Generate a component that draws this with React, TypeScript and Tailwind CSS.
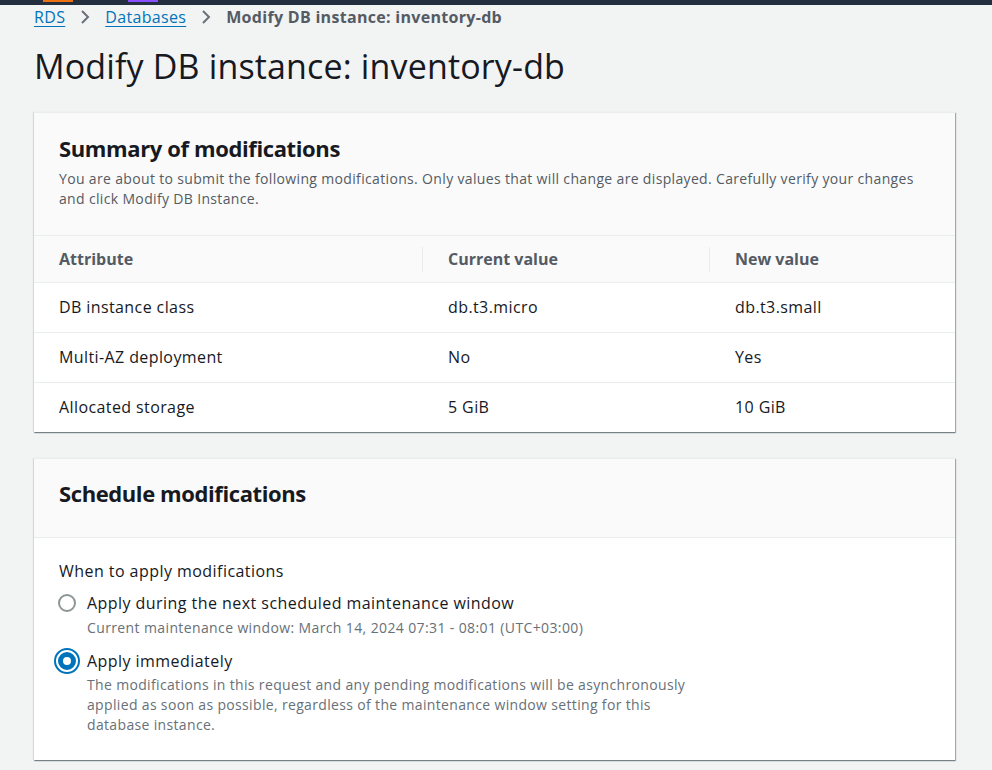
import React from "react";

const rows = [
  { attr: "DB instance class", current: "db.t3.micro", next: "db.t3.small" },
  { attr: "Multi-AZ deployment", current: "No", next: "Yes" },
  { attr: "Allocated storage", current: "5 GiB", next: "10 GiB" },
];

const cardShadow =
  "shadow-[1px_1px_1px_0_rgba(0,28,36,0.3),0_1px_1px_0_rgba(0,28,36,0.3),-1px_0_1px_0_rgba(0,28,36,0.08)]";

const Chevron: React.FC = () => (
  <svg width="10" height="16" viewBox="0 0 10 16" className="mx-[15px]" fill="none">
    <path d="M2 2l6 6-6 6" stroke="#687078" strokeWidth="2" />
  </svg>
);

const App: React.FC = () => {
  return (
    <div className="min-h-[770px] bg-[#f2f3f3] font-['Open_Sans',sans-serif] text-[#16191f]">
      {/* top nav sliver */}
      <div className="flex h-[5px] items-start bg-[#232f3e]">
        <div className="ml-[43px] h-[2px] w-[30px] bg-[#ec7211]" />
        <div className="ml-[55px] h-[2px] w-[30px] bg-[#8c4fff]" />
      </div>

      <div className="pl-[34px] pr-[37px]">
        {/* breadcrumbs */}
        <nav className="flex h-[24px] items-center text-[16px] leading-[24px] tracking-[0.33px]">
          <a className="text-[#0073bb] underline underline-offset-[3px]">RDS</a>
          <Chevron />
          <a className="text-[#0073bb] underline underline-offset-[3px]">Databases</a>
          <Chevron />
          <span className="font-bold text-[#545b64] tracking-[0.3px]">Modify DB instance: inventory-db</span>
        </nav>

        <h1 className="mt-[15px] text-[34px] leading-[44px] font-normal tracking-[0.15px]">
          Modify DB instance: inventory-db
        </h1>

        {/* summary card */}
        <section className={`mt-[24px] bg-white ${cardShadow}`}>
          <div className="border-t border-[#eaeded] bg-[#fafafa] px-[25px] pt-[21px] pb-[26px]">
            <h2 className="text-[22px] leading-[28px] font-bold tracking-[-0.38px]">
              Summary of modifications
            </h2>
            <p className="mt-[7px] text-[14px] leading-[20px] tracking-[0.34px] text-[#545b64]">
              You are about to submit the following modifications. Only values that will change are
              displayed. Carefully verify your changes and click Modify DB Instance.
            </p>
          </div>

          <div className="grid grid-cols-[388px_287px_1fr] border-t border-[#eaeded] bg-[#fafafa] text-[16px] font-bold text-[#545b64]">
            <div className="flex h-[46px] items-center pl-[25px]">Attribute</div>
            <div className="flex h-[46px] items-center">
              <span className="h-[25px] border-l border-[#eaeded]" />
              <span className="pl-[25px]">Current value</span>
            </div>
            <div className="flex h-[46px] items-center">
              <span className="h-[25px] border-l border-[#eaeded]" />
              <span className="pl-[25px]">New value</span>
            </div>
          </div>

          {rows.map((r) => (
            <div
              key={r.attr}
              className="grid h-[50px] grid-cols-[388px_287px_1fr] items-center border-t border-[#eaeded] text-[16px] tracking-[0.4px]"
            >
              <div className="pl-[25px] pb-[2px]">{r.attr}</div>
              <div className="pl-[26px] pb-[2px]">{r.current}</div>
              <div className="pl-[26px] pb-[2px]">{r.next}</div>
            </div>
          ))}
        </section>

        {/* schedule card */}
        <section className={`mt-[26px] bg-white ${cardShadow}`}>
          <div className="h-[80px] border-t border-b border-[#eaeded] bg-[#fafafa] px-[25px] pt-[20px]">
            <h2 className="text-[22px] leading-[28px] font-bold tracking-[-0.4px]">
              Schedule modifications
            </h2>
          </div>

          <div className="px-[25px] pt-[21px] pb-[25px] tracking-[0.45px]">
            <div className="text-[16px] leading-[24px]">When to apply modifications</div>

            <div className="mt-[8px] flex">
              <div className="flex h-[24px] w-[28px] shrink-0 items-center">
                <span className="ml-[-1px] h-[18px] w-[18px] rounded-full border-2 border-[#8d9696] bg-white" />
              </div>
              <div>
                <div className="text-[16px] leading-[24px]">
                  Apply during the next scheduled maintenance window
                </div>
                <div className="mt-[3px] text-[14px] leading-[20px] tracking-[0.38px] text-[#687078]">
                  Current maintenance window: March 14, 2024 07:31 - 08:01 (UTC+03:00)
                </div>
              </div>
            </div>

            <div className="mt-[11px] flex">
              <div className="flex h-[24px] w-[28px] shrink-0 items-center">
                <span className="ml-[-5px] flex h-[26px] w-[26px] rounded-full border-2 border-[#0073bb] bg-white p-[2px]">
                  <span className="h-full w-full rounded-full border-[5px] border-[#0073bb] bg-white" />
                </span>
              </div>
              <div>
                <div className="text-[16px] leading-[24px]">Apply immediately</div>
                <div className="mt-[2px] max-w-[610px] text-[14px] leading-[20px] tracking-[0.34px] text-[#687078]">
                  The modifications in this request and any pending modifications will be
                  asynchronously applied as soon as possible, regardless of the maintenance window
                  setting for this database instance.
                </div>
              </div>
            </div>
          </div>
        </section>
      </div>
    </div>
  );
};

export default App;
